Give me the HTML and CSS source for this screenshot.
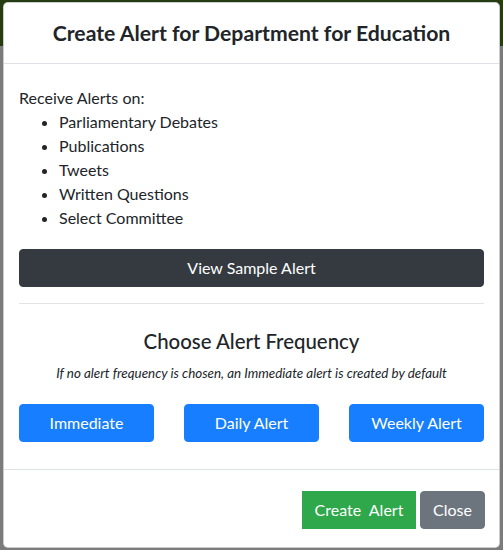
FILE: index.html
```html
<!DOCTYPE html>
<html>
<head>
<meta charset="utf-8">
<link rel="stylesheet" href="styles.css">
</head>
<body>
<div class="modal">
  <div class="modal-header">
    <h5 class="modal-title">Create Alert for Department for Education</h5>
  </div>
  <div class="modal-body">
    <p class="intro">Receive Alerts on:</p>
    <ul class="sources">
      <li>Parliamentary Debates</li>
      <li>Publications</li>
      <li>Tweets</li>
      <li>Written Questions</li>
      <li>Select Committee</li>
    </ul>
    <button class="btn btn-dark btn-block">View Sample Alert</button>
    <hr class="divider">
    <h5 class="freq-title">Choose Alert Frequency</h5>
    <p class="note">If no alert frequency is chosen, an Immediate alert is created by default</p>
    <div class="freq-row">
      <button class="btn btn-primary btn-freq">Immediate</button>
      <button class="btn btn-primary btn-freq">Daily Alert</button>
      <button class="btn btn-primary btn-freq">Weekly Alert</button>
    </div>
  </div>
  <div class="modal-footer">
    <button class="btn btn-success btn-square">Create&nbsp; Alert</button>
    <button class="btn btn-secondary">Close</button>
  </div>
</div>
</body>
</html>
```
FILE: styles.css
```css
html, body {
  margin: 0;
  padding: 0;
}
body {
  width: 503px;
  height: 550px;
  overflow: hidden;
  background: linear-gradient(#263d12 0, #263d12 46px, #7b7b7b 46px, #7b7b7b 100%);
  font-family: Lato, "Noto Sans", sans-serif;
  color: #212529;
}
.modal {
  margin: 2px 3px 0 3px;
  width: 497px;
  height: 546px;
  box-sizing: border-box;
  background: #fff;
  border: 1px solid rgba(0,0,0,.2);
  border-radius: 5px;
  display: flex;
  flex-direction: column;
}
.modal-header {
  padding: 15px;
  border-bottom: 1px solid #dee2e6;
  text-align: center;
}
.modal-title {
  margin: 0;
  font-size: 21.2px;
  line-height: 30px;
  font-weight: 700;
}
.modal-body {
  padding: 22px 15px 27px 15px;
  font-size: 16px;
  line-height: 24px;
}
.intro {
  margin: 0;
}
.sources {
  margin: 0;
  padding-left: 40px;
}
.btn {
  font-family: inherit;
  font-size: 16px;
  line-height: 24px;
  padding: 6px 12px;
  border: 1px solid transparent;
  border-radius: 4px;
  color: #fff;
  cursor: pointer;
  white-space: nowrap;
  box-sizing: border-box;
}
.btn-block {
  display: block;
  width: 100%;
  margin-top: 19px;
}
.btn-dark {
  background: #343a40;
  border-color: #343a40;
}
.btn-primary {
  background: #177eff;
  border-color: #177eff;
}
.btn-success {
  background: #2ea84a;
  border-color: #2ea84a;
}
.btn-secondary {
  background: #6c757d;
  border-color: #6c757d;
}
.btn-square {
  border-radius: 0;
}
.divider {
  margin: 16px 0 0 0;
  border: 0;
  border-top: 1px solid #e3e3e3;
}
.freq-title {
  margin: 22px 0 0 0;
  text-align: center;
  font-size: 20.4px;
  line-height: 30px;
  font-weight: 500;
}
.note {
  margin: 7px 0 0 0;
  text-align: center;
  font-style: italic;
  font-size: 13.4px;
  line-height: 20px;
}
.freq-row {
  margin-top: 21px;
  display: flex;
  justify-content: space-between;
}
.btn-freq {
  width: 135px;
}
.modal-footer {
  border-top: 1px solid #dee2e6;
  padding: 21px 14px 18px 15px;
  display: flex;
  justify-content: flex-end;
  gap: 4px;
}
.modal-footer .btn-success {
  width: 114px;
  padding: 6px 8px;
}
.modal-footer .btn-secondary {
  width: 65px;
  padding: 6px 8px;
}
```
